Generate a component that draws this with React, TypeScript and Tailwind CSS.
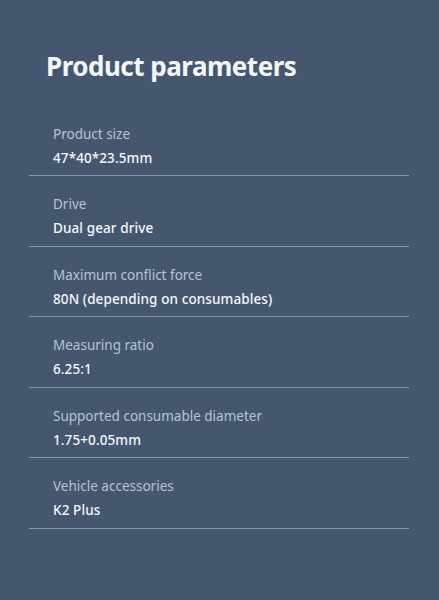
import React from "react";

const rows = [
  ["Product size", "47*40*23.5mm"],
  ["Drive", "Dual gear drive"],
  ["Maximum conflict force", "80N (depending on consumables)"],
  ["Measuring ratio", "6.25:1"],
  ["Supported consumable diameter", "1.75+0.05mm"],
  ["Vehicle accessories", "K2 Plus"],
];

export default function App() {
  return (
    <div
      className="w-[439px] h-[600px] bg-[#44576f] overflow-hidden"
      style={{ fontFamily: '"Noto Sans", Inter, sans-serif' }}
    >
      <h1 className="pt-[48px] pl-[46px] text-[26px] leading-[36px] font-bold tracking-[-0.5px] text-[#f4f6f8]">
        Product parameters
      </h1>
      <div className="mt-[21.5px] ml-[29px] w-[380px]">
        {rows.map(([label, value]) => (
          <div
            key={label}
            className="h-[70.5px] border-b border-[#8596ab] pl-[24px] pt-[18px] flex flex-col gap-[4px]"
          >
            <div className="text-[13.5px] leading-[20px] text-[#b9c3cf]">{label}</div>
            <div className="text-[13.5px] leading-[20px] font-medium tracking-[0.1px] text-[#f6f7f9]">
              {value}
            </div>
          </div>
        ))}
      </div>
    </div>
  );
}
